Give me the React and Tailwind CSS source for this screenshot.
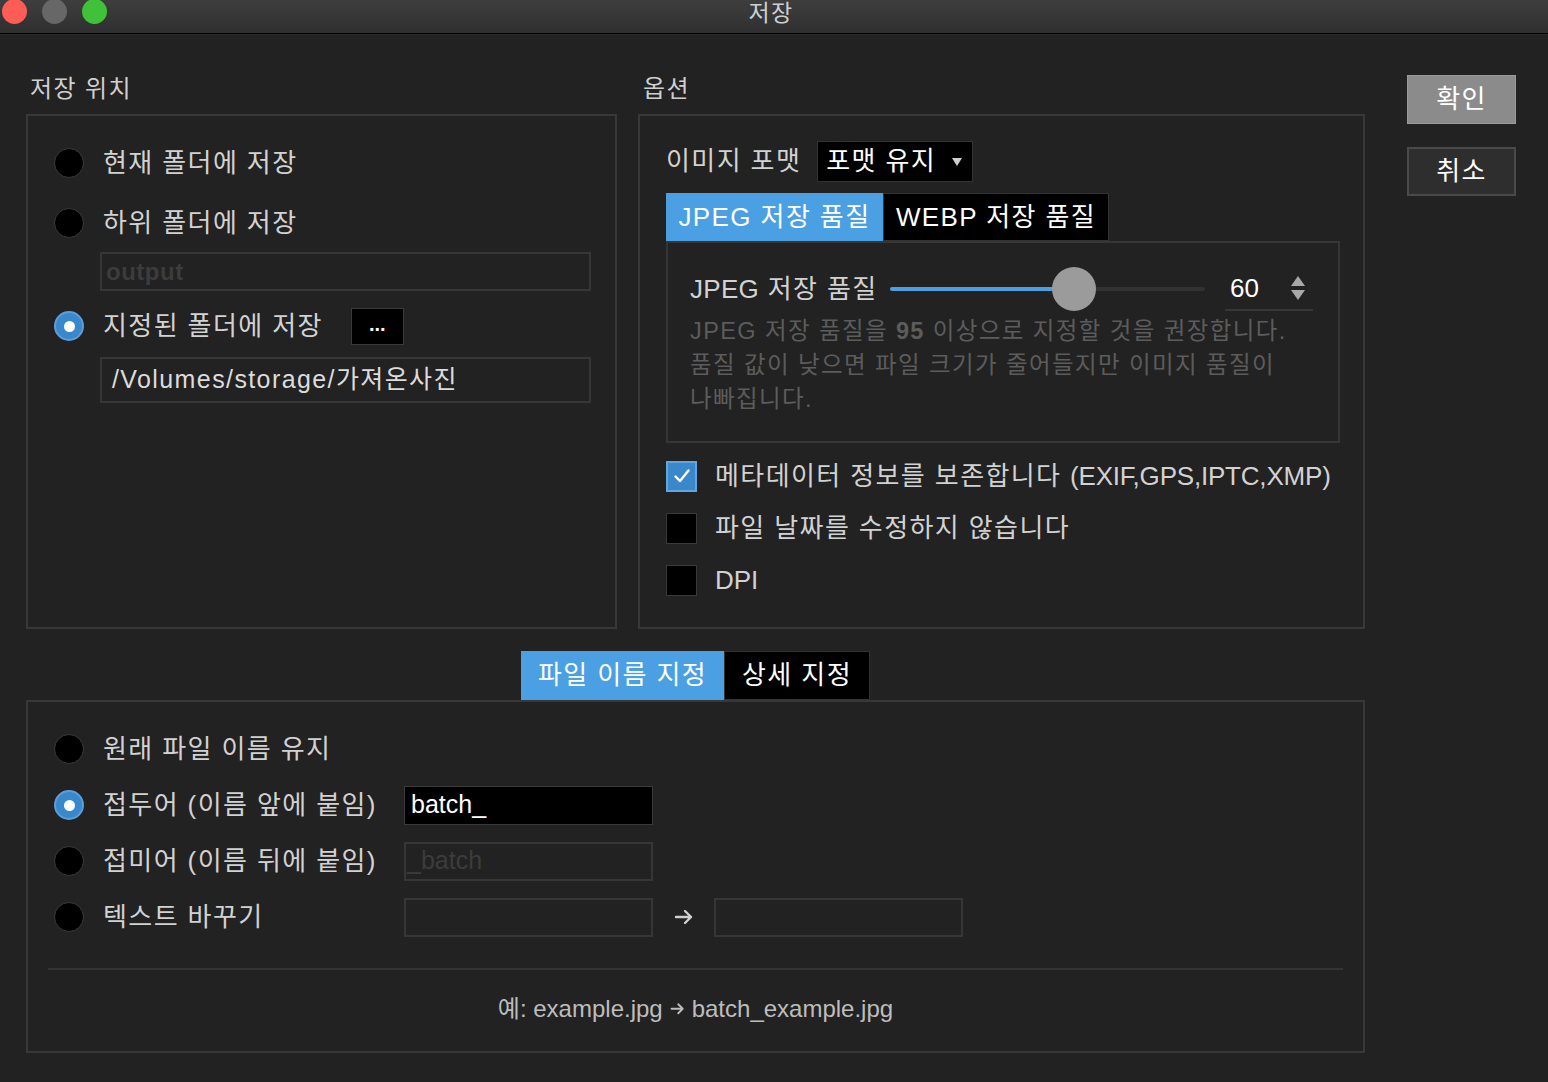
import React from 'react';

const Radio = ({ checked }) =>
  checked ? (
    <span className="w-[30px] h-[30px] rounded-full bg-[#3a88cc] border-2 border-[#5c9fd8] flex items-center justify-center shrink-0">
      <span className="w-[11px] h-[11px] rounded-full bg-white" />
    </span>
  ) : (
    <span className="w-[30px] h-[30px] rounded-full bg-black border border-[#3a3a3a] shrink-0" />
  );

const Checkbox = ({ checked }) =>
  checked ? (
    <span className="w-[31px] h-[31px] bg-[#3a88cc] border-2 border-[#62a6e0] flex items-center justify-center shrink-0">
      <svg width="20" height="20" viewBox="0 0 20 20" fill="none">
        <path d="M3.5 10.5 L8 15 L16.5 4.5" stroke="white" strokeWidth="2.4" strokeLinecap="round" strokeLinejoin="round" />
      </svg>
    </span>
  ) : (
    <span className="w-[31px] h-[31px] bg-black border border-[#3a3a3a] shrink-0" />
  );

const RadioRow = ({ checked, label }) => (
  <div className="flex items-center h-[40px]">
    <Radio checked={checked} />
    <span className="ml-[19px] text-[26px] text-[#d2d2d2] whitespace-nowrap">{label}</span>
  </div>
);

const CheckRow = ({ checked, children }) => (
  <div className="flex items-center h-[40px]">
    <Checkbox checked={checked} />
    <span className="ml-[18px] text-[26px] text-[#d2d2d2] whitespace-nowrap">{children}</span>
  </div>
);

const Tab = ({ active, label, width }) => (
  <div
    className={`h-full flex items-center justify-center text-[26px] whitespace-nowrap ${width} ${
      active ? 'bg-[#4aa0e2] text-white' : 'bg-black text-white border border-[#333]'
    }`}
  >
    {label}
  </div>
);

const Arrow = ({ size, color }) => (
  <svg width={size} height={size * 0.9} viewBox="0 0 20 18" fill="none">
    <path d="M2 9 H17 M11 3 L17 9 L11 15" stroke={color} strokeWidth="2.4" strokeLinecap="round" strokeLinejoin="round" />
  </svg>
);

export default function App() {
  return (
    <div className="w-[1548px] h-[1082px] bg-[#222222] overflow-hidden font-['Liberation_Sans','Noto_Sans_CJK_KR',sans-serif] tracking-[1.4px] text-[#d2d2d2]">
      {/* Title bar */}
      <div className="h-[33px] bg-linear-to-b from-[#3e3e3e] to-[#2f2f2f] grid grid-cols-3 items-start">
        <div className="flex gap-[15px] pl-[2px] -mt-[1px]">
          <span className="w-[25px] h-[25px] rounded-full bg-[#fe5c56]" />
          <span className="w-[25px] h-[25px] rounded-full bg-[#676767]" />
          <span className="w-[25px] h-[25px] rounded-full bg-[#3fc23a]" />
        </div>
        <div className="text-center text-[23px] leading-[26px] text-[#cfcfcf] pr-[6px]">저장</div>
        <div />
      </div>
      <div className="h-[1px] bg-black" />
      <div className="h-[1px] bg-[#2b2b2b]" />

      <div className="flex pl-[26px] pt-[39px]">
        <div className="flex flex-col w-[1339px]">
          {/* Top row */}
          <div className="flex gap-[21px]">
            {/* Save location */}
            <div className="flex flex-col">
              <div className="h-[30px] leading-[30px] pl-[4px] text-[24px] text-[#cfcfcf] mb-[10px]">저장 위치</div>
              <div className="w-[591px] h-[515px] border-2 border-[#383838] pl-[26px] pt-[27px] flex flex-col">
                <RadioRow label="현재 폴더에 저장" />
                <div className="mt-[20px]">
                  <RadioRow label="하위 폴더에 저장" />
                </div>
                <div className="ml-[46px] mt-[9px] w-[491px] h-[39px] border-2 border-[#363636] flex items-center pl-[4px] text-[24px] font-bold tracking-[0.5px] text-[#3c3c3c]">
                  output
                </div>
                <div className="mt-[15px] flex items-center h-[40px]">
                  <Radio checked />
                  <span className="ml-[19px] text-[26px] text-[#d2d2d2] whitespace-nowrap">지정된 폴더에 저장</span>
                  <span className="ml-[28px] w-[53px] h-[37px] bg-black border border-[#3a3a3a] flex items-center justify-center text-[20px] font-bold text-white leading-none pb-[4px] tracking-[0px]">
                    ...
                  </span>
                </div>
                <div className="ml-[46px] mt-[11px] w-[491px] h-[46px] border-2 border-[#363636] flex items-center pl-[10px] text-[25px] text-[#dcdcdc] whitespace-nowrap">
                  /Volumes/storage/가져온사진
                </div>
              </div>
            </div>

            {/* Options */}
            <div className="flex flex-col">
              <div className="h-[30px] leading-[30px] pl-[5px] text-[24px] text-[#cfcfcf] mb-[10px]">옵션</div>
              <div className="w-[727px] h-[515px] border-2 border-[#383838] pl-[26px] pt-[25px] flex flex-col">
                <div className="flex items-center h-[41px]">
                  <span className="text-[26px] text-[#d2d2d2] whitespace-nowrap">이미지 포맷</span>
                  <div className="ml-[16px] w-[156px] h-[41px] bg-black border border-[#333] flex items-center pl-[8px] pr-[9px] justify-between">
                    <span className="text-[26px] text-white whitespace-nowrap">포맷 유지</span>
                    <svg width="12" height="10" viewBox="0 0 12 10">
                      <path d="M1 1 L11 1 L6 9 Z" fill="#cfcfcf" />
                    </svg>
                  </div>
                </div>

                <div className="mt-[11px] h-[48px] flex">
                  <Tab active label="JPEG 저장 품질" width="w-[217px]" />
                  <Tab label="WEBP 저장 품질" width="w-[226px]" />
                </div>

                <div className="w-[674px] h-[202px] border-2 border-[#363636] pl-[22px] pt-[24px] flex flex-col">
                  <div className="flex items-center h-[44px]">
                    <span className="text-[26px] text-[#d2d2d2] whitespace-nowrap w-[200px]">
                      <span className="tracking-[0.3px]">JPEG</span> 저장 품질
                    </span>
                    <div className="relative w-[315px] h-[4px] bg-[#333333] rounded-full">
                      <div className="h-full w-[170px] bg-[#4aa0e2] rounded-full" />
                      <span className="absolute left-[162px] -top-[20px] w-[44px] h-[44px] rounded-full bg-[#9b9b9b]" />
                    </div>
                    <div className="ml-[20px] w-[88px] h-[44px] border-b-2 border-[#363636] flex items-center justify-between pl-[5px] pr-[6px]">
                      <span className="text-[26px] text-white tracking-[0px]">60</span>
                      <svg width="18" height="28" viewBox="0 0 18 28">
                        <path d="M2 12 L9 2 L16 12 Z" fill="#a8a8a8" />
                        <path d="M2 16 L9 26 L16 16 Z" fill="#a8a8a8" />
                      </svg>
                    </div>
                  </div>
                  <div className="mt-[3px] text-[23.5px] leading-[34px] text-[#5c5c5c] whitespace-nowrap">
                    JPEG 저장 품질을 <span className="font-bold">95</span> 이상으로 지정할 것을 권장합니다.
                    <br />
                    품질 값이 낮으면 파일 크기가 줄어들지만 이미지 품질이
                    <br />
                    나빠집니다.
                  </div>
                </div>

                <div className="mt-[13px] flex flex-col gap-[12px]">
                  <CheckRow checked>
                    메타데이터 정보를 보존합니다 <span className="tracking-[-0.2px]">(EXIF,GPS,IPTC,XMP)</span>
                  </CheckRow>
                  <CheckRow>파일 날짜를 수정하지 않습니다</CheckRow>
                  <CheckRow>
                    <span className="tracking-[0px]">DPI</span>
                  </CheckRow>
                </div>
              </div>
            </div>
          </div>

          {/* Bottom tabs */}
          <div className="mt-[22px] h-[49px] flex justify-center">
            <Tab active label="파일 이름 지정" width="w-[203px]" />
            <Tab label="상세 지정" width="w-[146px]" />
          </div>

          {/* File naming panel */}
          <div className="w-[1339px] h-[353px] border-2 border-[#383838] pt-[27px] flex flex-col">
            <div className="pl-[26px] flex flex-col gap-[16px]">
              <RadioRow label="원래 파일 이름 유지" />
              <div className="flex items-center h-[40px]">
                <div className="flex items-center w-[350px]">
                  <Radio checked />
                  <span className="ml-[19px] text-[26px] text-[#d2d2d2] whitespace-nowrap">접두어 (이름 앞에 붙임)</span>
                </div>
                <div className="w-[249px] h-[39px] bg-black border border-[#3a3a3a] flex items-center pl-[6px] text-[25px] text-white tracking-[0px]">
                  batch_
                </div>
              </div>
              <div className="flex items-center h-[40px]">
                <div className="flex items-center w-[350px]">
                  <Radio />
                  <span className="ml-[19px] text-[26px] text-[#d2d2d2] whitespace-nowrap">접미어 (이름 뒤에 붙임)</span>
                </div>
                <div className="w-[249px] h-[39px] border-2 border-[#363636] flex items-center pl-[1px] text-[25px] text-[#3c3c3c] tracking-[0px]">
                  _batch
                </div>
              </div>
              <div className="flex items-center h-[40px]">
                <div className="flex items-center w-[350px]">
                  <Radio />
                  <span className="ml-[19px] text-[26px] text-[#d2d2d2] whitespace-nowrap">텍스트 바꾸기</span>
                </div>
                <div className="w-[249px] h-[39px] border-2 border-[#363636]" />
                <div className="w-[61px] flex items-center justify-center">
                  <Arrow size={20} color="#cfcfcf" />
                </div>
                <div className="w-[249px] h-[39px] border-2 border-[#363636]" />
              </div>
            </div>
            <div className="mx-[20px] mt-[31px] h-[2px] bg-[#333333]" />
            <div className="mt-[24px] h-[30px] flex items-center justify-center gap-[7px] text-[24px] text-[#bdbdbd] whitespace-nowrap tracking-[0px]">
              <span>예: example.jpg</span>
              <Arrow size={15} color="#bdbdbd" />
              <span>batch_example.jpg</span>
            </div>
          </div>
        </div>

        {/* Buttons */}
        <div className="ml-[42px] pt-[1px] flex flex-col gap-[23px]">
          <div className="w-[109px] h-[49px] bg-[#8b8b8b] border border-[#9a9a9a] flex items-center justify-center text-[26px] text-white">
            확인
          </div>
          <div className="w-[109px] h-[49px] bg-[#2e2e2e] border-2 border-[#4a4a4a] flex items-center justify-center text-[26px] text-white">
            취소
          </div>
        </div>
      </div>
    </div>
  );
}
